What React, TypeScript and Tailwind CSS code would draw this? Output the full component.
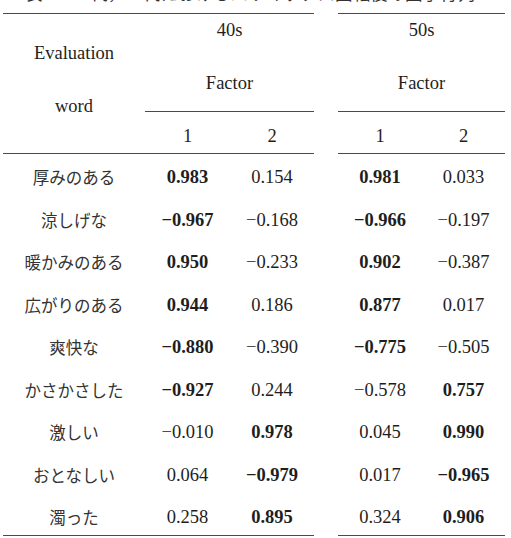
import React from "react";

type Cell = { v: string; b?: boolean };

const rows: { word: string; cells: Cell[] }[] = [
    { word: "厚みのある", cells: [{ v: "0.983", b: true }, { v: "0.154" }, { v: "0.981", b: true }, { v: "0.033" }] },
    { word: "涼しげな", cells: [{ v: "−0.967", b: true }, { v: "−0.168" }, { v: "−0.966", b: true }, { v: "−0.197" }] },
    { word: "暖かみのある", cells: [{ v: "0.950", b: true }, { v: "−0.233" }, { v: "0.902", b: true }, { v: "−0.387" }] },
    { word: "広がりのある", cells: [{ v: "0.944", b: true }, { v: "0.186" }, { v: "0.877", b: true }, { v: "0.017" }] },
    { word: "爽快な", cells: [{ v: "−0.880", b: true }, { v: "−0.390" }, { v: "−0.775", b: true }, { v: "−0.505" }] },
    { word: "かさかさした", cells: [{ v: "−0.927", b: true }, { v: "0.244" }, { v: "−0.578" }, { v: "0.757", b: true }] },
    { word: "激しい", cells: [{ v: "−0.010" }, { v: "0.978", b: true }, { v: "0.045" }, { v: "0.990", b: true }] },
    { word: "おとなしい", cells: [{ v: "0.064" }, { v: "−0.979", b: true }, { v: "0.017" }, { v: "−0.965", b: true }] },
    { word: "濁った", cells: [{ v: "0.258" }, { v: "0.895", b: true }, { v: "0.324" }, { v: "0.906", b: true }] },
];

const serif = "font-['Liberation_Serif','Noto_Sans_CJK_JP',serif]";
const jp = "font-['Noto_Sans_CJK_JP','Noto_Sans_CJK_SC',sans-serif]";

export default function App() {
    return (
        <div className={`flex flex-col w-[511px] h-[538px] overflow-hidden bg-white text-[#1e1e1e] ${serif}`}>
            {/* caption, mostly scrolled off the top */}
            <div className="-mt-[15px] h-[18px] pl-[25px] text-[17.5px] leading-[18px] whitespace-nowrap text-[#333]">
                表 3.1 40代，50代におけるバリマックス回転後の因子行列
            </div>

            {/* header */}
            <div className="grid grid-cols-[142px_85px_84px_24px_84px_83px] ml-[3px] mt-[10px] text-[18.5px] leading-[26px]">
                <div className="row-span-2 border-t border-b border-[#4a4a4a] flex flex-col items-center pt-[26px] gap-[27px]">
                    <span>Evaluation</span>
                    <span>word</span>
                </div>
                <div className="col-span-2 h-[99px] border-t border-b border-[#4a4a4a] flex flex-col items-center pt-[3px] gap-[27px]">
                    <span>40s</span>
                    <span>Factor</span>
                </div>
                <div className="row-span-2" />
                <div className="col-span-2 h-[99px] border-t border-b border-[#4a4a4a] flex flex-col items-center pt-[3px] gap-[27px]">
                    <span>50s</span>
                    <span>Factor</span>
                </div>
                <div className="h-[42px] border-b border-[#4a4a4a] pt-[11px] text-center">1</div>
                <div className="h-[42px] border-b border-[#4a4a4a] pt-[11px] text-center">2</div>
                <div className="h-[42px] border-b border-[#4a4a4a] pt-[11px] text-center">1</div>
                <div className="h-[42px] border-b border-[#4a4a4a] pt-[11px] text-center">2</div>
            </div>

            {/* body */}
            <div className="grid grid-cols-[142px_85px_84px_24px_84px_83px] ml-[3px] pt-[2px] leading-[26px]">
                {rows.map((r, i) => {
                    const last = i === rows.length - 1;
                    const cellCls = last
                        ? "h-[40px] pt-[8px] text-center border-b border-[#4a4a4a]"
                        : "h-[42.5px] pt-[8px] text-center";
                    return (
                        <React.Fragment key={r.word}>
                            <div className={`${cellCls} ${jp} text-[16.5px] text-[#333]`}>{r.word}</div>
                            {r.cells.slice(0, 2).map((c, j) => (
                                <div key={j} className={`${cellCls} text-[18.5px] ${c.b ? "font-bold" : ""}`}>{c.v}</div>
                            ))}
                            <div className={last ? "h-[40px]" : "h-[42.5px]"} />
                            {r.cells.slice(2).map((c, j) => (
                                <div key={j + 2} className={`${cellCls} text-[18.5px] ${c.b ? "font-bold" : ""}`}>{c.v}</div>
                            ))}
                        </React.Fragment>
                    );
                })}
            </div>
        </div>
    );
}
